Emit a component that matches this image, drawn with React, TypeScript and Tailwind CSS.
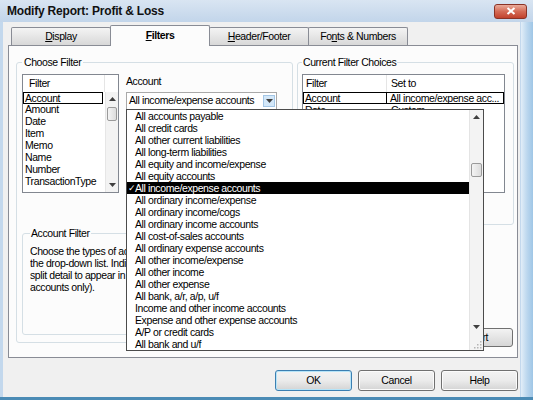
import type { ReactNode } from 'react';

const filterFields = ['Account', 'Amount', 'Date', 'Item', 'Memo', 'Name', 'Number', 'TransactionType'];

const accountChoices = [
  'All accounts payable',
  'All credit cards',
  'All other current liabilities',
  'All long-term liabilities',
  'All equity and income/expense',
  'All equity accounts',
  'All income/expense accounts',
  'All ordinary income/expense',
  'All ordinary income/cogs',
  'All ordinary income accounts',
  'All cost-of-sales accounts',
  'All ordinary expense accounts',
  'All other income/expense',
  'All other income',
  'All other expense',
  'All bank, a/r, a/p, u/f',
  'Income and other income accounts',
  'Expense and other expense accounts',
  'A/P or credit cards',
  'All bank and u/f',
];

const SELECTED = 'All income/expense accounts';

// label with one mnemonic letter underlined
function Mnemonic({ text, at }: { text: string; at: number }) {
  return (
    <>
      {text.slice(0, at)}
      <span className="underline underline-offset-[1px]">{text[at]}</span>
      {text.slice(at + 1)}
    </>
  );
}

function Arrow({ up }: { up?: boolean }) {
  return (
    <svg width="7" height="4" viewBox="0 0 7 4">
      <path d={up ? 'M0 4L3.5 0L7 4Z' : 'M0 0H7L3.5 4Z'} fill="#3f3f3f" />
    </svg>
  );
}

function Tab({ children, active, first }: { children: ReactNode; active?: boolean; first?: boolean }) {
  if (active) {
    return (
      <div className="relative z-10 -ml-px mb-[-1px] w-[100px] h-[21px] border border-b-0 border-[#898c95] rounded-t-[2px] bg-[#fcfcfc] flex items-center justify-center font-bold">
        {children}
      </div>
    );
  }
  return (
    <div
      className={`${first ? '' : '-ml-px'} w-[100px] h-[18px] border border-b-0 border-[#898c95] rounded-t-[2px] bg-gradient-to-b from-[#f4f4f4] to-[#d8d8d8] flex items-center justify-center`}
    >
      {children}
    </div>
  );
}

function DialogButton({ children, primary }: { children: ReactNode; primary?: boolean }) {
  return (
    <button
      className={`w-[77px] h-[21px] rounded-[3px] border bg-gradient-to-b from-[#f3f3f3] via-[#ebebeb] to-[#d4d4d4] text-black ${
        primary ? 'border-[#3c7fb1] shadow-[inset_0_0_0_1px_#b6e4f8]' : 'border-[#707070] shadow-[inset_0_0_0_1px_#fbfbfb]'
      }`}
    >
      {children}
    </button>
  );
}

export default function App() {
  return (
    <div className="w-[533px] h-[400px] flex flex-col bg-[#c3d8ed] font-['Liberation_Sans',Arial,sans-serif] text-[10.5px] tracking-[-0.4px] text-black overflow-hidden">
      {/* title bar */}
      <div className="h-[22px] flex items-center pl-[7px] pr-[6px] bg-gradient-to-b from-[#d9e5f2] to-[#c2d5ea]">
        <span className="font-bold text-[12px] tracking-[-0.2px] text-[#111]">Modify Report: Profit &amp; Loss</span>
        <div className="ml-auto w-[33px] h-[15px] rounded-[3px] border border-[#8a3326] bg-gradient-to-b from-[#e9ab9b] via-[#d46a55] to-[#c1412c] flex items-center justify-center">
          <svg width="10" height="8" viewBox="0 0 10 8">
            <path d="M1.5 1L8.5 7M8.5 1L1.5 7" stroke="#fff" strokeWidth="2" />
          </svg>
        </div>
      </div>

      <div className="flex flex-1">
        <div className="ml-[3px] w-[517px] h-[375px] bg-[#f0f0f0] flex flex-col">
          {/* tabs */}
          <div className="h-[23px] flex items-end pl-[8px]">
            <Tab first>
              <Mnemonic text="Display" at={0} />
            </Tab>
            <Tab active>
              <Mnemonic text="Filters" at={0} />
            </Tab>
            <Tab>
              <Mnemonic text="Header/Footer" at={0} />
            </Tab>
            <Tab>
              <Mnemonic text="Fonts & Numbers" at={2} />
            </Tab>
          </div>

          {/* tab page */}
          <div className="ml-[5px] w-[510px] h-[313px] border border-[#898c95] bg-[#fcfcfc] flex gap-[4px] pl-[7px] pt-[10px]">
            <fieldset className="w-[277px] h-[287px] border border-[#d5dfe5] rounded-[3px] px-[5px] m-0 min-w-0">
              <legend className="px-[2px] leading-[12px]">Choose Filter</legend>
              <div className="flex mt-[6px]">
                {/* filter field list */}
                <div className="w-[97px] h-[119px] border border-[#828790] bg-white flex flex-col">
                  <div className="h-[17px] flex">
                    <div className="w-[82px] border-r border-[#e5e5e5] pl-[6px] leading-[17px]">Filter</div>
                  </div>
                  <div className="flex flex-1">
                    <div className="flex-1">
                      {filterFields.map((f, i) => (
                        <div
                          key={f}
                          className={`h-[12px] leading-[11px] w-[80px] ${i === 0 ? 'border border-black pl-px' : 'pl-[2px]'}`}
                        >
                          {f}
                        </div>
                      ))}
                    </div>
                    <div className="w-[13px] bg-[#f3f3f3] border-l border-[#e6e6e6] flex flex-col">
                      <div className="h-[14px] flex items-center justify-center">
                        <Arrow up />
                      </div>
                      <div className="mt-px h-[14px] mx-px rounded-[2px] border border-[#9a9a9a] bg-gradient-to-r from-[#f4f4f4] to-[#dcdcdc]" />
                      <div className="flex-1" />
                      <div className="h-[14px] flex items-center justify-center">
                        <Arrow />
                      </div>
                    </div>
                  </div>
                </div>

                {/* account picker */}
                <div className="ml-[7px] flex flex-col">
                  <div className="mt-px leading-[12px]">Account</div>
                  <div className="relative mt-[5px] w-[151px] h-[18px] border border-[#a9a9a9] bg-white flex items-center pl-[2px]">
                    <span className="whitespace-nowrap">{SELECTED}</span>
                    <div className="ml-auto mr-px w-[12px] h-[12px] bg-[#d3e7f8] border border-[#a3c6e6] flex items-center justify-center">
                      <Arrow />
                    </div>

                    {/* open drop-down list */}
                    <div className="absolute left-[-1px] top-full z-20 w-[358px] h-[242px] border border-[#4b4b4b] bg-white flex">
                      <div className="flex-1">
                        {accountChoices.map((a) => {
                          const on = a === SELECTED;
                          return (
                            <div
                              key={a}
                              className={`h-[12px] leading-[12px] flex whitespace-nowrap ${on ? 'bg-black text-white' : ''}`}
                            >
                              <span className="w-[8px] pl-px text-[9px]">{on ? '✓' : ''}</span>
                              {a}
                            </div>
                          );
                        })}
                      </div>
                      <div className="w-[14px] bg-[#f3f3f3] border-l border-[#e4e4e4] flex flex-col">
                        <div className="h-[14px] flex items-center justify-center">
                          <Arrow up />
                        </div>
                        <div className="mt-[39px] h-[14px] mx-px rounded-[2px] border border-[#9a9a9a] bg-gradient-to-r from-[#f4f4f4] to-[#dcdcdc]" />
                        <div className="flex-1" />
                        <div className="h-[14px] flex items-center justify-center">
                          <Arrow />
                        </div>
                        <div className="h-[16px] flex items-end justify-end pr-px pb-px">
                          <svg width="9" height="9" viewBox="0 0 9 9" fill="#b4b4b4">
                            <rect x="7" y="1" width="1.5" height="1.5" />
                            <rect x="4" y="4" width="1.5" height="1.5" />
                            <rect x="7" y="4" width="1.5" height="1.5" />
                            <rect x="1" y="7" width="1.5" height="1.5" />
                            <rect x="4" y="7" width="1.5" height="1.5" />
                            <rect x="7" y="7" width="1.5" height="1.5" />
                          </svg>
                        </div>
                      </div>
                    </div>
                  </div>
                </div>
              </div>

              <fieldset className="mt-[34px] h-[108px] border border-[#d5dfe5] rounded-[3px] px-[7px] m-0 min-w-0">
                <legend className="px-[1px] leading-[12px]">Account Filter</legend>
                {/* the open list covers the right part of this help text */}
                <div className="w-[96px] overflow-hidden pt-[6px] leading-[12px] whitespace-nowrap">
                  <div>Choose the types of accounts you want from</div>
                  <div>the drop-down list. Indicate whether you want</div>
                  <div>split detail to appear in the report (balance sheet</div>
                  <div>accounts only).</div>
                </div>
              </fieldset>
            </fieldset>

            <div className="w-[217px] flex flex-col">
              <fieldset className="h-[169px] border border-[#d5dfe5] rounded-[3px] px-[4px] m-0 min-w-0">
                <legend className="px-[1px] leading-[12px]">Current Filter Choices</legend>
                <div className="mt-[6px] w-[203px] h-[119px] border border-[#828790] bg-white">
                  <div className="h-[17px] flex leading-[17px]">
                    <div className="w-[84px] border-r border-[#e5e5e5] pl-[3px]">Filter</div>
                    <div className="pl-[4px]">Set to</div>
                  </div>
                  <div className="h-[12px] flex border border-black leading-[10px]">
                    <div className="w-[83px] border-r border-black pl-px">Account</div>
                    <div className="flex-1 min-w-0 pl-[3px] whitespace-nowrap">All income/expense acc...</div>
                  </div>
                  <div className="h-[12px] flex leading-[12px]">
                    <div className="w-[84px] pl-[2px]">Date</div>
                    <div className="pl-[4px]">Custom</div>
                  </div>
                </div>
              </fieldset>
              <button className="mt-[103px] self-end mr-px w-[83px] h-[19px] rounded-[3px] border border-[#707070] bg-gradient-to-b from-[#f3f3f3] to-[#d6d6d6] flex items-center justify-end pr-[24px]">
                Revert
              </button>
            </div>
          </div>

          {/* dialog buttons */}
          <div className="mt-[12px] flex justify-end gap-[6px] pr-[2px]">
            <DialogButton primary>OK</DialogButton>
            <DialogButton>Cancel</DialogButton>
            <DialogButton>Help</DialogButton>
          </div>
        </div>
        <div className="flex-1 ml-px bg-gradient-to-r from-[#e2eef8] via-[#bcd7ee] to-[#9fc6e6]" />
      </div>
      <div className="h-[3px] bg-[#4b8bb5]" />
    </div>
  );
}
